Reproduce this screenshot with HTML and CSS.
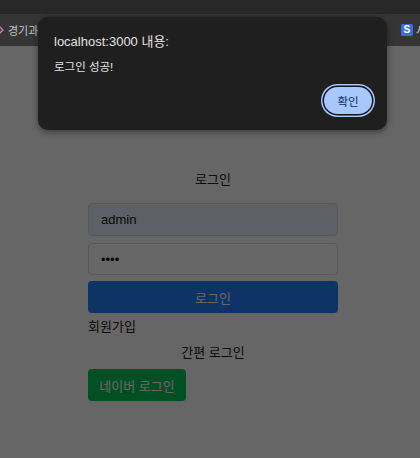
FILE: index.html
```html
<!DOCTYPE html>
<html lang="ko">
<head>
<meta charset="utf-8">
<title>로그인</title>
<link rel="stylesheet" href="styles.css">
</head>
<body>
  <div class="topbar"></div>
  <div class="bookmarks">
    <div class="bm-left">
      <svg class="bm-chev" width="6" height="8" viewBox="0 0 6 8"><path d="M1 1 L4 4 L1 7" fill="none" stroke="#c98aa8" stroke-width="1.3"/></svg>
      <span class="bm-text">경기과학고</span>
    </div>
    <div class="bm-right">
      <span class="bm-s">S</span>
      <span class="bm-text">사</span>
    </div>
  </div>
  <main class="page">
    <div class="login">
      <h1 class="title">로그인</h1>
      <input class="field autofill" type="text" value="admin">
      <input class="field" type="password" value="1234">
      <button class="btn-primary">로그인</button>
      <div class="signup">회원가입</div>
      <div class="easy">간편 로그인</div>
      <button class="btn-naver">네이버 로그인</button>
    </div>
    <div class="dim"></div>
  </main>
  <div class="dialog">
    <div class="dlg-title">localhost:3000 내용:</div>
    <div class="dlg-msg">로그인 성공!</div>
    <div class="dlg-actions">
      <button class="dlg-ok">확인</button>
    </div>
  </div>
</body>
</html>
```
FILE: styles.css
```css
html, body {
  margin: 0;
  padding: 0;
}
body {
  width: 420px;
  height: 458px;
  overflow: hidden;
  display: flex;
  flex-direction: column;
  font-family: "Liberation Sans", "Noto Sans CJK KR", sans-serif;
  position: relative;
  background: #666;
}
.topbar {
  height: 14px;
  flex: none;
  background: #282828;
}
.bookmarks {
  height: 32px;
  flex: none;
  background: #353535;
  display: flex;
  align-items: center;
  justify-content: space-between;
  overflow: hidden;
}
.bm-left, .bm-right {
  display: flex;
  align-items: center;
  gap: 3px;
}
.bm-left { margin-left: -1px; }
.bm-right { margin-right: -6px; gap: 3px; }
.bm-text {
  font-size: 11px;
  color: #c7c7c7;
  white-space: nowrap;
}
.bm-s {
  width: 12px;
  height: 12px;
  background: #3a6fe2;
  color: #fff;
  font-size: 10px;
  font-weight: bold;
  border-radius: 2px;
  display: flex;
  align-items: center;
  justify-content: center;
  line-height: 1;
}
.page {
  flex: 1;
  background: #fff;
  position: relative;
}
.login {
  width: 250px;
  margin-left: 88px;
  padding-top: 124px;
  display: flex;
  flex-direction: column;
  font-size: 13px;
  color: #222;
}
.title {
  margin: 0 0 13px;
  font-size: 13px;
  font-weight: normal;
  line-height: 20px;
  text-align: center;
}
.field {
  box-sizing: border-box;
  width: 250px;
  height: 33px;
  margin: 0 0 7px;
  padding: 0 12px;
  border: 1px solid #dcdcdc;
  border-radius: 4px;
  font-family: inherit;
  font-size: 13px;
  color: #111;
  background: #fff;
  outline: none;
}
.field + .field {
  height: 32px;
  margin-bottom: 6px;
}
.autofill {
  background: #e8f0fe;
}
.btn-primary {
  box-sizing: border-box;
  height: 32px;
  border: none;
  border-radius: 4px;
  background: #2a80ff;
  color: #fff;
  font-family: inherit;
  font-size: 13px;
  margin-bottom: 4px;
}
.signup {
  line-height: 20px;
  margin-bottom: 6px;
}
.easy {
  line-height: 20px;
  text-align: center;
  margin-bottom: 6px;
}
.btn-naver {
  box-sizing: border-box;
  align-self: flex-start;
  width: 98px;
  height: 32px;
  border: none;
  border-radius: 4px;
  background: #03c75a;
  color: #fff;
  font-family: inherit;
  font-size: 13px;
}
.dim {
  position: absolute;
  inset: 0;
  background: rgba(0, 0, 0, 0.6);
}
.dialog {
  position: absolute;
  left: 38px;
  top: 17px;
  width: 349px;
  height: 113px;
  box-sizing: border-box;
  padding: 15px 15px 0 16px;
  background: #1f1f1f;
  border-radius: 10px;
  box-shadow: 0 2px 6px rgba(0, 0, 0, 0.45);
  display: flex;
  flex-direction: column;
  color: #e3e3e3;
}
.dlg-title {
  font-size: 13px;
  line-height: 20px;
}
.dlg-msg {
  margin-top: 7px;
  font-size: 11.5px;
  line-height: 16px;
}
.dlg-actions {
  display: flex;
  justify-content: flex-end;
  margin-top: 12px;
}
.dlg-ok {
  width: 48px;
  height: 27px;
  border: none;
  border-radius: 14px;
  background: #a8c7fa;
  color: #062e6f;
  font-family: inherit;
  font-size: 11.5px;
  box-shadow: 0 0 0 1.5px #0b1628, 0 0 0 3px #a8c7fa;
}
```
